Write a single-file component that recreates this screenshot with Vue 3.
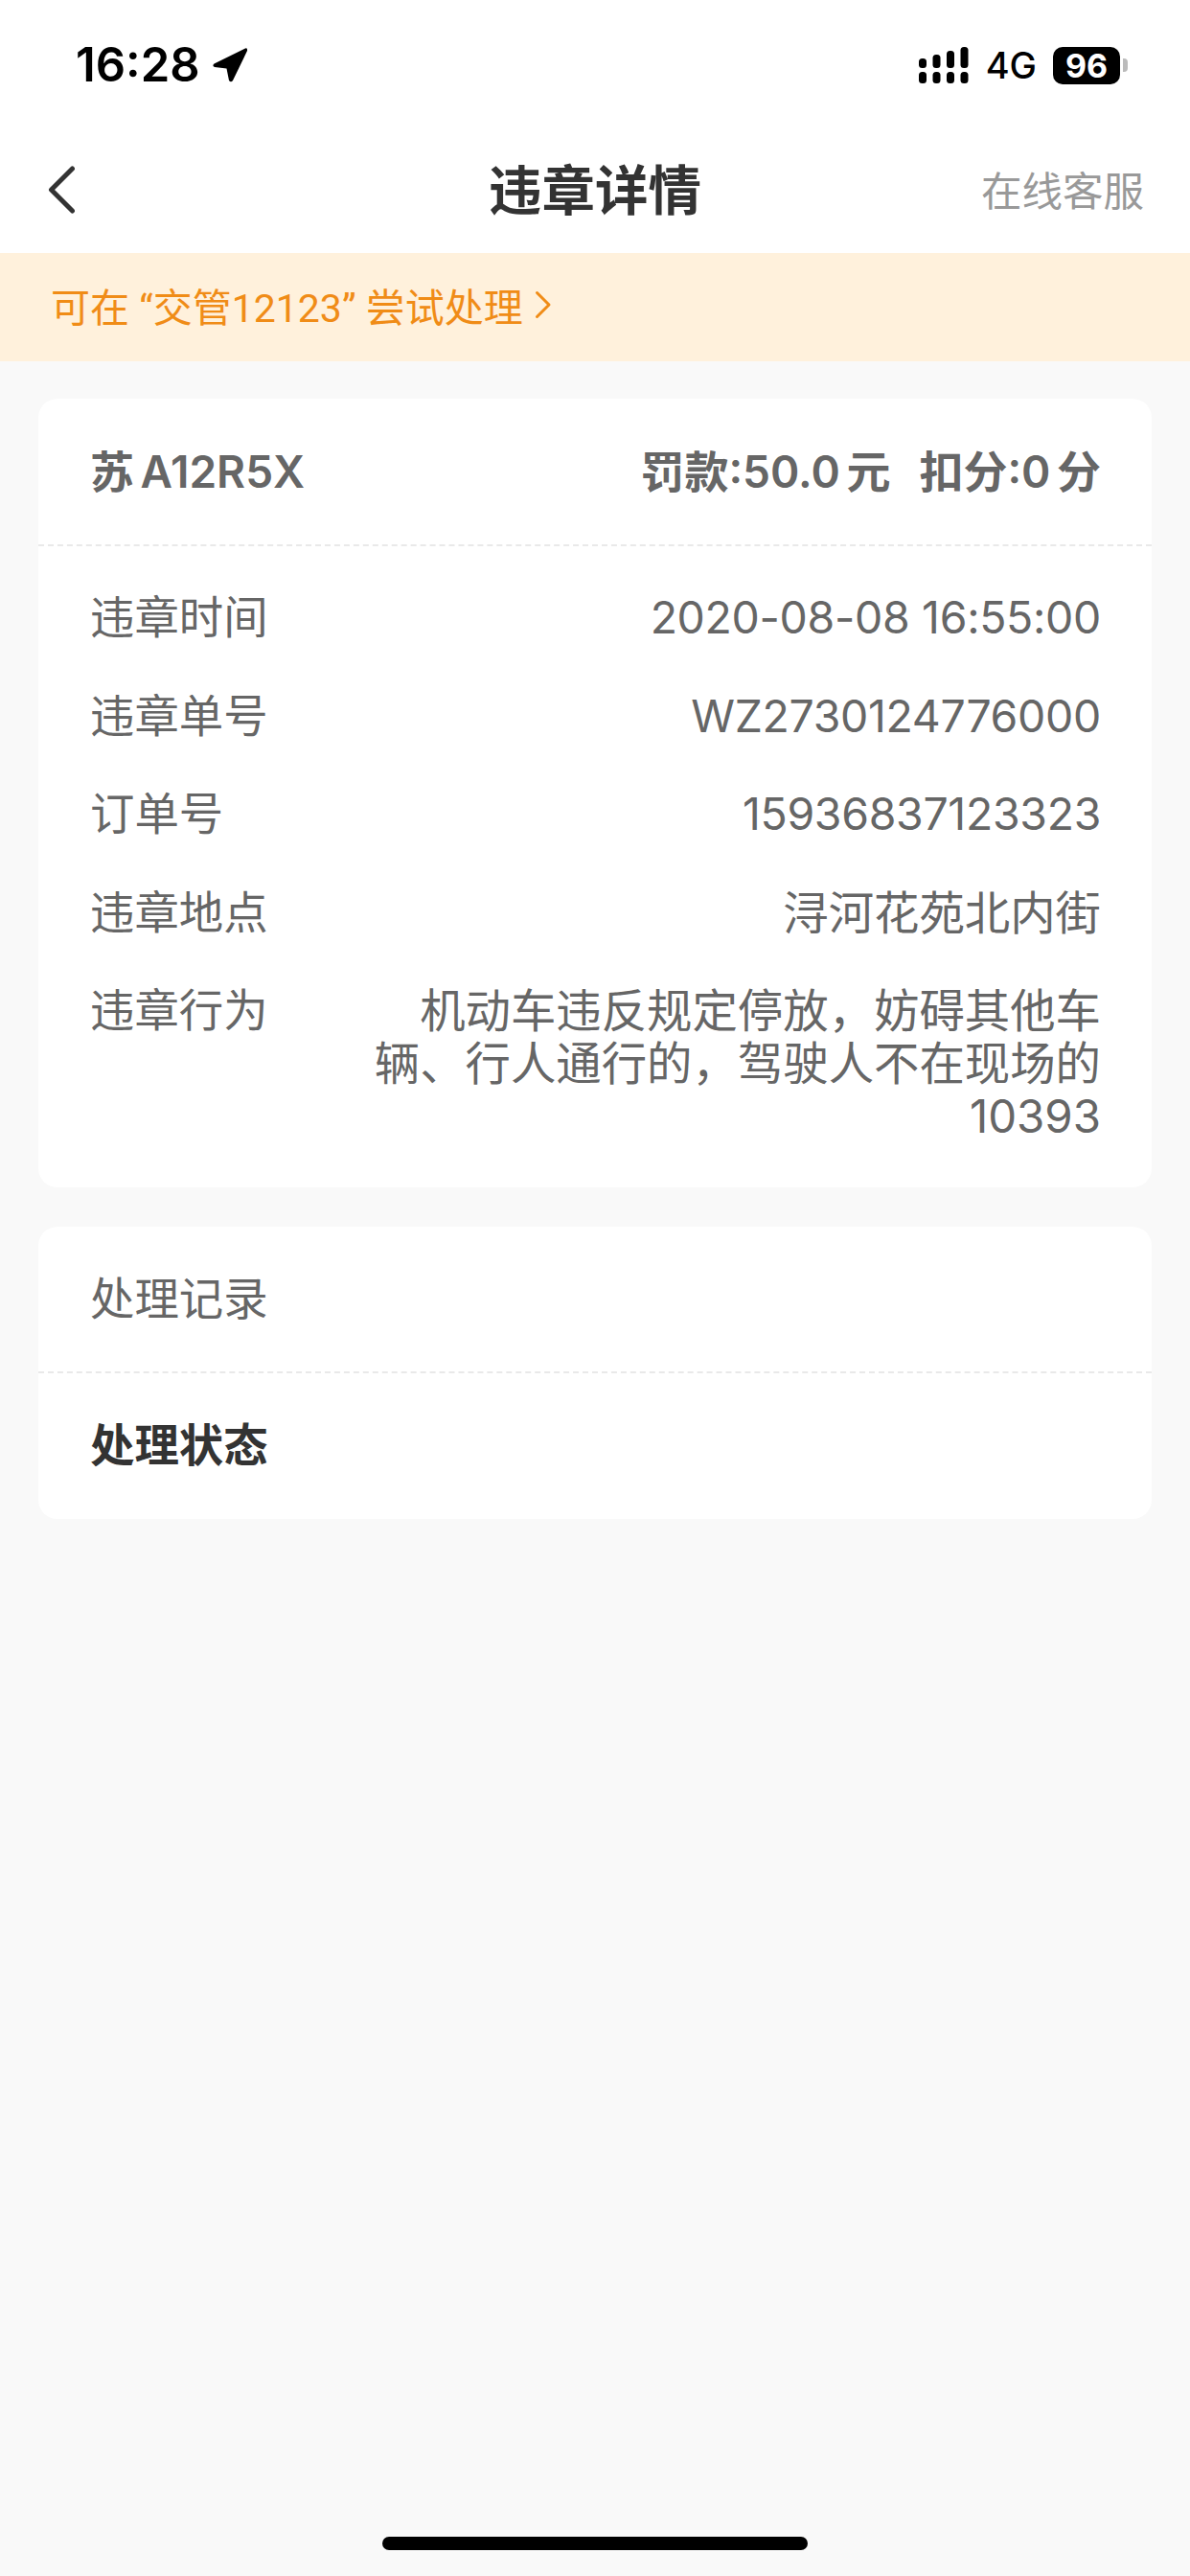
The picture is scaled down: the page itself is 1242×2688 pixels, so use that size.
<template>
  <div class="page">
    <!-- Status bar -->
    <div class="status-bar">
      <div class="status-left">
        <span class="time">16:28</span>
        <svg class="arrow" width="38" height="38" viewBox="0 0 38 38">
          <path d="M35 1.5 L2.5 17.5 Q0 19.5 3 21 L15.5 22.5 L18 35 Q20 37.5 22 35 L37 4 Q37.5 0.5 35 1.5 Z" fill="#000" />
        </svg>
      </div>
      <div class="status-right">
        <svg class="signal" width="52" height="38" viewBox="0 0 52 38">
          <rect x="0" y="12" width="8" height="10" rx="3.5" fill="#000" />
          <rect x="14.5" y="8" width="8" height="14" rx="3.5" fill="#000" />
          <rect x="29" y="4" width="8" height="18" rx="3.5" fill="#000" />
          <rect x="43.5" y="0" width="8" height="22" rx="3.5" fill="#000" />
          <rect x="0" y="26" width="8" height="12" rx="3.5" fill="#000" />
          <rect x="14.5" y="26" width="8" height="12" rx="3.5" fill="#000" />
          <rect x="29" y="26" width="8" height="12" rx="3.5" fill="#000" />
          <rect x="43.5" y="26" width="8" height="12" rx="3.5" fill="#000" />
        </svg>
        <span class="net">4G</span>
        <div class="battery">
          <span class="battery-body">96</span>
          <span class="battery-nub"></span>
        </div>
      </div>
    </div>

    <!-- Nav -->
    <div class="nav">
      <svg class="back" width="32" height="54" viewBox="0 0 32 54">
        <path d="M25.5 5 L3.5 27 L25.5 49" fill="none" stroke="#333" stroke-width="5" stroke-linecap="round" stroke-linejoin="round" />
      </svg>
      <span class="nav-title">违章详情</span>
      <span class="nav-service">在线客服</span>
    </div>

    <!-- Tip -->
    <div class="tip">
      <span>可在 “交管12123” 尝试处理</span>
      <svg width="18" height="30" viewBox="0 0 18 30">
        <path d="M2.5 2.5 L15 15 L2.5 27.5" fill="none" stroke="#f08c17" stroke-width="3" stroke-linecap="round" stroke-linejoin="round" />
      </svg>
    </div>

    <div class="content">
      <div class="card">
        <div class="card-head">
          <span>苏 A12R5X</span>
          <span class="fees"><span>罚款:50.0 元</span><span>扣分:0 分</span></span>
        </div>
        <div class="card-body">
          <div v-for="row in rows" :key="row.label" class="row">
            <span class="row-label">{{ row.label }}</span>
            <span class="row-value" :class="{ cjk: row.cjk }">{{ row.value }}</span>
          </div>
        </div>
      </div>

      <div class="card">
        <div class="record-title">处理记录</div>
        <div class="record-status">处理状态</div>
      </div>
    </div>

    <div class="home-bar"></div>
  </div>
</template>

<script setup>
const rows = [
  { label: '违章时间', value: '2020-08-08 16:55:00' },
  { label: '违章单号', value: 'WZ2730124776000' },
  { label: '订单号', value: '15936837123323' },
  { label: '违章地点', value: '浔河花苑北内街', cjk: true },
  { label: '违章行为', value: '机动车违反规定停放，妨碍其他车辆、行人通行的，驾驶人不在现场的10393', cjk: true }
]
</script>

<style>
html, body {
  margin: 0;
  background: #f9f9f9;
}
</style>

<style scoped>
.page {
  width: 1242px;
  height: 2688px;
  display: flex;
  flex-direction: column;
  background: #f9f9f9;
  font-family: Inter, "Noto Sans CJK SC", sans-serif;
  color: #666;
  overflow: hidden;
}

/* Status bar */
.status-bar {
  height: 134px;
  box-sizing: border-box;
  padding: 42px 65px 0 79px;
  background: #fff;
  display: flex;
  justify-content: space-between;
  align-items: flex-start;
}

.status-left {
  display: flex;
  align-items: center;
  gap: 12px;
}

.time {
  font-size: 49px;
  line-height: 52px;
  font-weight: 600;
  color: #000;
}

.status-right {
  display: flex;
  align-items: center;
  margin-top: 6px;
}

.net {
  margin-left: 18px;
  font-size: 38px;
  line-height: 40px;
  font-weight: 500;
  color: #000;
}

.battery {
  margin-left: 17px;
  display: flex;
  align-items: center;
}

.battery-body {
  width: 70px;
  height: 39px;
  border-radius: 10px;
  background: #000;
  color: #fff;
  font-size: 34px;
  line-height: 39px;
  font-weight: 700;
  text-align: center;
}

.battery-nub {
  width: 5px;
  height: 14px;
  margin-left: 3px;
  border-radius: 0 4px 4px 0;
  background: #bbb;
}

/* Nav */
.nav {
  height: 130px;
  box-sizing: border-box;
  padding: 0 48px 8px 50px;
  background: #fff;
  display: flex;
  align-items: center;
  justify-content: space-between;
  position: relative;
}

.back {
  margin-top: 6px;
}

.nav-title {
  position: absolute;
  left: 0;
  right: 0;
  text-align: center;
  font-size: 55.5px;
  font-weight: 700;
  color: #333;
}

.nav-service {
  margin-top: 3px;
  font-size: 42.5px;
  color: #999;
}

/* Tip */
.tip {
  height: 113px;
  box-sizing: border-box;
  padding: 0 0 6px 53px;
  background: #fff1dc;
  color: #f08c17;
  font-family: Roboto, "Noto Sans CJK SC", sans-serif;
  font-size: 41px;
  display: flex;
  align-items: center;
  gap: 12px;
}

/* Cards */
.content {
  padding: 39px 40px 0;
  display: flex;
  flex-direction: column;
  gap: 41px;
}

.card {
  background: #fff;
  border-radius: 20px;
}

.card-head {
  height: 154px;
  box-sizing: border-box;
  padding: 0 53px 6px 54px;
  border-bottom: 2px dashed #e9e9e9;
  display: flex;
  align-items: center;
  justify-content: space-between;
  font-size: 46px;
  font-weight: 600;
  word-spacing: -5px;
}

.fees {
  display: flex;
  gap: 30px;
}

.card-body {
  padding: 47px 53px 47px 54px;
  display: flex;
  flex-direction: column;
  gap: 47.5px;
}

.row {
  display: flex;
  justify-content: space-between;
  font-size: 46.4px;
  line-height: 55px;
}

.row-label {
  flex-shrink: 0;
}

.row-value {
  width: 770px;
  text-align: right;
  letter-spacing: -0.3px;
}

.row-value.cjk {
  font-size: 47.4px;
  letter-spacing: 0;
}

.record-title {
  height: 153px;
  box-sizing: border-box;
  padding: 0 54px 9px;
  border-bottom: 2px dashed #e9e9e9;
  display: flex;
  align-items: center;
  font-size: 46.4px;
}

.record-status {
  height: 152px;
  box-sizing: border-box;
  padding: 0 54px 9px;
  display: flex;
  align-items: center;
  font-size: 46.4px;
  font-weight: 700;
  color: #333;
}

/* Home indicator */
.home-bar {
  width: 444px;
  height: 14px;
  margin: auto auto 27px;
  border-radius: 7px;
  background: #000;
}
</style>
